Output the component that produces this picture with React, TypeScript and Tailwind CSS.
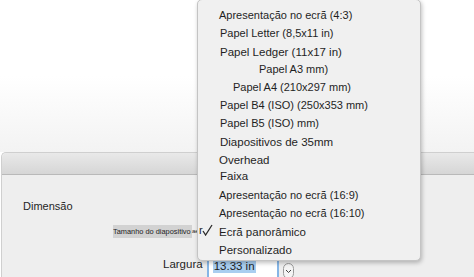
import React from "react";

const items: { label: string; pl: number; mt: string; size: string }[] = [
  { label: "Apresentação no ecrã (4:3)", pl: 21, mt: "mt-0", size: "text-[11px]" },
  { label: "Papel Letter (8,5x11 in)", pl: 22, mt: "mt-0", size: "text-[11px]" },
  { label: "Papel Ledger (11x17 in)", pl: 22, mt: "mt-[2px]", size: "text-[11.5px]" },
  { label: "Papel A3 mm)", pl: 61, mt: "-mt-[2px]", size: "text-[11px]" },
  { label: "Papel A4 (210x297 mm)", pl: 35, mt: "mt-0", size: "text-[11px]" },
  { label: "Papel B4 (ISO) (250x353 mm)", pl: 22, mt: "mt-0", size: "text-[11px]" },
  { label: "Papel B5 (ISO) mm)", pl: 22, mt: "mt-0", size: "text-[11px]" },
  { label: "Diapositivos de 35mm", pl: 22, mt: "mt-[2px]", size: "text-[11.5px]" },
  { label: "Overhead", pl: 21, mt: "mt-0", size: "text-[11.5px]" },
  { label: "Faixa", pl: 22, mt: "-mt-[2px]", size: "text-[11.5px]" },
  { label: "Apresentação no ecrã (16:9)", pl: 21, mt: "mt-0", size: "text-[11px]" },
  { label: "Apresentação no ecrã (16:10)", pl: 21, mt: "mt-0", size: "text-[11px]" },
  { label: "Ecrã panorâmico", pl: 21, mt: "mt-[2px]", size: "text-[11.5px]" },
  { label: "Personalizado", pl: 21, mt: "mt-0", size: "text-[11.5px]" },
];

export default function App() {
  return (
    <div
      className="relative w-[474px] h-[277px] overflow-hidden bg-white text-[#1f1f1f]"
      style={{ fontFamily: '"Liberation Sans", Arial, sans-serif' }}
    >
      {/* top area */}
      <div className="h-[152px] bg-gradient-to-b from-white via-white to-[#f3f3f3]" />

      {/* dialog */}
      <div className="ml-[1px] h-[125px] rounded-tl-[5px] border-l border-t border-[#cfcfcf] bg-[#eeeeee] flex flex-col">
        <div className="h-[22px] shrink-0 rounded-tl-[5px] bg-gradient-to-b from-[#e9e9e9] to-[#d6d6d6] border-b border-[#b9b9b9]" />
        <div className="flex flex-col">
          <div className="mt-[23px] ml-[21px] text-[11px] leading-[16px]">Dimensão</div>
          <div className="mt-[10px] ml-[111px] flex items-center h-[14px]">
            <div className="w-[79px] h-[13px] bg-[#d2d2d2] flex items-center overflow-hidden whitespace-nowrap text-[7.4px] leading-[13px] text-[#222]">
              Tamanho do diapositivo
            </div>
            <span className="text-[6px] leading-[13px]">ae</span>
          </div>
          <div className="mt-[12px] ml-[161px] flex items-start h-[40px]">
            <span className="text-[11.5px] leading-[16px] mt-[6px]">Largura</span>
            <div className="ml-[4px] mt-[4px] w-[72px] h-[28px] border-2 border-[#86b6e6] rounded-[2px] bg-white flex items-start pl-[4px] shrink-0">
              <span className="mt-[4px] bg-[#a9cef0] text-[11.5px] leading-[13px] px-[1px]">13.33 in</span>
            </div>
            <div className="ml-[4px] mt-[13px] w-[11px] h-[16px] rounded-full border border-[#9a9a9a] bg-[#f4f4f4] flex items-center justify-center shrink-0">
              <svg width="7" height="5" viewBox="0 0 7 5">
                <path d="M1 1 L3.5 3.5 L6 1" fill="none" stroke="#444" strokeWidth="1" />
              </svg>
            </div>
          </div>
        </div>
      </div>

      {/* dropdown menu overlay */}
      <div className="absolute left-[197px] top-[-1px] w-[224px] h-[262px] bg-[#f0f0f0] border border-[#c4c4c4] rounded-[5px] shadow-[1px_2px_4px_rgba(0,0,0,0.25)] pt-[6px]">
        {items.map((it) => (
          <div
            key={it.label}
            className={`h-[18px] flex items-center whitespace-nowrap ${it.mt} ${it.size}`}
            style={{ paddingLeft: it.pl }}
          >
            {it.label}
          </div>
        ))}
      </div>

      {/* stray "r" and checkmark drawn over the menu edge */}
      <div className="absolute left-[199px] top-[224px] flex items-start">
        <span className="text-[11px] leading-[12px] text-[#1f1f1f]">r</span>
        <svg width="11" height="12" viewBox="0 0 11 12" className="-ml-[1px]">
          <path d="M1 7 L3.6 11 L10 1" fill="none" stroke="#2a2a2a" strokeWidth="1.3" />
        </svg>
      </div>
    </div>
  );
}
